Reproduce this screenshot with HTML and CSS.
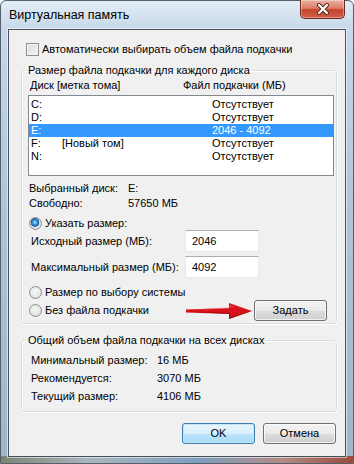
FILE: index.html
```html
<!DOCTYPE html>
<html lang="ru">
<head>
    <meta charset="UTF-8">
    <title>Виртуальная память</title>
    <link rel="stylesheet" href="styles.css">
</head>
<body>
    <div class="window">
        <div class="titlebar">
            <span class="title">Виртуальная память</span>
            <div class="close">
                <svg width="16" height="12" viewBox="0 0 16 12">
                    <path d="M4 2 L12 10 M12 2 L4 10" stroke="#5a2418" stroke-width="4" stroke-linecap="round"/>
                    <path d="M4 2 L12 10 M12 2 L4 10" stroke="#fff" stroke-width="2.2" stroke-linecap="round"/>
                </svg>
            </div>
        </div>

        <div class="client">
            <div class="check-row">
                <span class="checkbox"></span>
                <span>Автоматически выбирать объем файла подкачки</span>
            </div>

            <fieldset class="group group-disks">
                <legend>Размер файла подкачки для каждого диска</legend>
                <div class="cols">
                    <span class="col-disk">Диск [метка тома]</span>
                    <span>Файл подкачки (МБ)</span>
                </div>
                <div class="list">
                    <div class="row"><span class="c-disk">C:</span><span class="c-label"></span><span>Отсутствует</span></div>
                    <div class="row"><span class="c-disk">D:</span><span class="c-label"></span><span>Отсутствует</span></div>
                    <div class="row selected"><span class="c-disk">E:</span><span class="c-label"></span><span>2046 - 4092</span></div>
                    <div class="row"><span class="c-disk">F:</span><span class="c-label">[Новый том]</span><span>Отсутствует</span></div>
                    <div class="row"><span class="c-disk">N:</span><span class="c-label"></span><span>Отсутствует</span></div>
                </div>

                <div class="info">
                    <span>Выбранный диск:</span><span>E:</span>
                    <span>Свободно:</span><span>57650 МБ</span>
                </div>

                <div class="radio-row first">
                    <span class="radio checked"></span>
                    <span>Указать размер:</span>
                </div>
                <div class="field-row">
                    <span class="field-label">Исходный размер (МБ):</span>
                    <span class="edit">2046</span>
                </div>
                <div class="field-row second">
                    <span class="field-label">Максимальный размер (МБ):</span>
                    <span class="edit">4092</span>
                </div>
                <div class="radio-row system">
                    <span class="radio"></span>
                    <span>Размер по выбору системы</span>
                </div>
                <div class="radio-row last">
                    <span class="radio"></span>
                    <span>Без файла подкачки</span>
                    <svg class="arrow" width="68" height="18" viewBox="0 0 68 18">
                        <path d="M1 7.6 L44 6 L44 1 L67 9 L44 17 L44 12 L1 10.4 Z" fill="#d8121a"/>
                        <path d="M1 9.6 L44 12 L44 17 L67 9 L66 9 L45 15 L45 10.8 Z" fill="#8e0a10" opacity=".7"/>
                        <path d="M2 8 L44 6.8 L45 3 L50 5 Z" fill="#f2676b" opacity=".6"/>
                    </svg>
                    <span class="btn">Задать</span>
                </div>
            </fieldset>

            <fieldset class="group group-total">
                <legend>Общий объем файла подкачки на всех дисках</legend>
                <div class="totals">
                    <span>Минимальный размер:</span><span>16 МБ</span>
                    <span>Рекомендуется:</span><span>3070 МБ</span>
                    <span>Текущий размер:</span><span>4106 МБ</span>
                </div>
            </fieldset>

            <div class="buttons">
                <span class="btn default">OK</span>
                <span class="btn">Отмена</span>
            </div>
        </div>
    </div>
</body>
</html>
```

FILE: styles.css
```css
* {
    margin: 0;
    padding: 0;
    box-sizing: border-box;
}

body {
    width: 354px;
    height: 464px;
    overflow: hidden;
    font-family: "Liberation Sans", "Noto Sans", sans-serif;
    font-size: 11px;
    color: #000;
    background: #fff;
    white-space: nowrap;
}

.window {
    width: 354px;
    height: 464px;
    border: 1px solid #55606c;
    border-radius: 6px 6px 0 0;
    background:
        linear-gradient(to right, #7d8474 0, #aab6bd 25%, #7f9fc0 55%, #b08c84 80%, #9d4a3d 100%) left bottom / 100% 7px no-repeat,
        linear-gradient(to bottom, #e3edf6 0, #c6d8ea 28px, #afc4d9 45%, #9fb5cc 100%);
}

/* title bar */
.titlebar {
    height: 28px;
    display: flex;
    justify-content: space-between;
    align-items: flex-start;
}

.title {
    padding: 7px 0 0 8px;
    line-height: 15px;
    font-size: 12.5px;
}

.close {
    width: 45px;
    height: 19px;
    margin: -1px 8px 0 0;
    border: 1px solid #6b2b20;
    border-top: 0;
    border-radius: 0 0 5px 5px;
    background: linear-gradient(to bottom, #eab1a2 0, #dd7e68 45%, #c7432b 55%, #d0604a 100%);
    box-shadow: inset 0 0 0 1px rgba(255,255,255,.35);
    display: flex;
    justify-content: center;
    align-items: center;
}

/* client area */
.client {
    height: 428px;
    margin: 0 7px;
    border: 1px solid #49525c;
    box-shadow: 0 0 0 1px rgba(255,255,255,.55);
    background: #f0f0f0;
    display: flex;
    flex-direction: column;
}

.check-row {
    display: flex;
    align-items: center;
    line-height: 13px;
    margin: 13px 0 0 17px;
}

.checkbox {
    width: 13px;
    height: 13px;
    border: 1px solid #8e8f8f;
    background: linear-gradient(135deg, #dcdcdc, #f6f6f6);
    box-shadow: inset 0 0 0 1px #f4f4f4;
    margin-right: 3px;
}

/* group boxes */
.group {
    margin: 7px 8px 0 12px;
    border: 1px solid #d5dfe5;
    border-radius: 3px;
    box-shadow: inset 1px 1px 0 #fff, 1px 1px 0 #fff;
}

.group legend {
    margin-left: 4px;
    padding: 0 2px;
    line-height: 14px;
}

.cols {
    display: flex;
    line-height: 13px;
    margin: 2px 0 0 8px;
}

.col-disk {
    width: 153px;
}

.list {
    height: 81px;
    margin: 3px 2px 0 6px;
    border: 1px solid #828790;
    background: #fff;
    padding-top: 2px;
}

.row {
    display: flex;
    height: 13px;
    line-height: 13px;
    padding-left: 2px;
}

.row.selected {
    background: #3399ff;
    color: #fff;
}

.c-disk {
    width: 31px;
}

.c-label {
    width: 150px;
}

.info,
.totals {
    display: grid;
    grid-template-columns: 99px auto;
    line-height: 15px;
    margin: 5px 0 0 7px;
}

.radio-row {
    display: flex;
    align-items: center;
    line-height: 13px;
    margin-left: 7px;
}

.radio-row.first {
    margin-top: 6px;
}

.radio-row.system {
    margin-top: 8px;
}

.radio-row.last {
    height: 21px;
    margin: 1px 0 2px 7px;
}

.radio {
    width: 13px;
    height: 13px;
    border-radius: 50%;
    border: 1px solid #8d8d8d;
    background: radial-gradient(circle at 45% 40%, #f8f8f8, #d8d8d8);
    margin-right: 3px;
}

.radio.checked {
    background: radial-gradient(circle at 45% 40%, #a8dcff 0, #2d8fd6 2.5px, #165a9e 4px, #dcdcdc 4.6px, #f4f4f4 100%);
}

.field-row {
    display: flex;
    align-items: center;
    margin-left: 9px;
}

.field-row.second {
    margin-top: 4px;
}

.field-label {
    width: 154px;
}

.edit {
    width: 74px;
    height: 22px;
    line-height: 20px;
    padding-left: 6px;
    background: #fff;
    border: 1px solid #e3e9ef;
    border-top-color: #abadb3;
}

.arrow {
    margin-left: auto;
}

.btn {
    width: 73px;
    height: 21px;
    line-height: 19px;
    text-align: center;
    border: 1px solid #707070;
    border-radius: 3px;
    background: linear-gradient(to bottom, #f2f2f2 0, #ebebeb 50%, #dddddd 51%, #cfcfcf 100%);
    box-shadow: inset 0 0 0 1px rgba(255,255,255,.7);
}

.radio-row .btn {
    margin: 0 9px 0 1px;
}

.group-total {
    margin-top: 9px;
}

.totals {
    grid-template-columns: 126px auto;
    line-height: 18px;
    margin: 4px 0 6px 9px;
}

.buttons {
    display: flex;
    justify-content: flex-end;
    gap: 8px;
    margin: 11px 9px 0 0;
}

.btn.default {
    border-color: #3c7fb1;
    background: linear-gradient(to bottom, #eaf6fd 0, #d9f0fc 50%, #bee6fd 51%, #a7d9f5 100%);
    box-shadow: inset 0 0 0 1px #c2e6fa;
}
```
